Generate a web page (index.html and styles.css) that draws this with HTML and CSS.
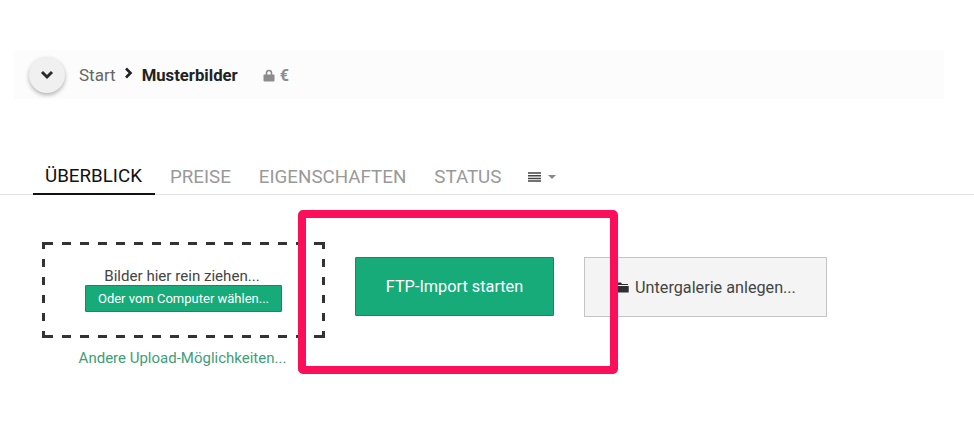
FILE: index.html
```html
<!DOCTYPE html>
<html lang="de">
<head>
  <meta charset="UTF-8" />
  <meta name="viewport" content="width=device-width, initial-scale=1.0"/>
  <title>Musterbilder</title>
  <link rel="stylesheet" href="styles.css">
</head>
<body>
  <div class="crumbs">
    <button class="btn-round" type="button">
      <svg width="14" height="10" viewBox="0 0 14 10"><path d="M2 2 L7 7 L12 2" fill="none" stroke="#2b2b2b" stroke-width="3"/></svg>
    </button>
    <a class="crumb" href="#">Start</a>
    <svg class="crumb-sep" width="9" height="12" viewBox="0 0 9 12"><path d="M2 1.5 L6.5 6 L2 10.5" fill="none" stroke="#222" stroke-width="2.6"/></svg>
    <strong class="crumb-current">Musterbilder</strong>
    <span class="crumb-icons">
      <svg width="12" height="13" viewBox="0 0 12 13"><path d="M3.5 6 V4 a2.5 2.5 0 0 1 5 0 V6" fill="none" stroke="#8c8c8c" stroke-width="1.6"/><rect x="0.5" y="5.5" width="11" height="7" rx="1" fill="#8c8c8c"/></svg>
      <span class="euro">€</span>
    </span>
  </div>

  <nav class="tabs">
    <a class="tab active" href="#">ÜBERBLICK</a>
    <a class="tab" href="#">PREISE</a>
    <a class="tab" href="#">EIGENSCHAFTEN</a>
    <a class="tab" href="#">STATUS</a>
    <a class="tab tab-more" href="#">
      <svg width="13" height="10" viewBox="0 0 13 10"><path d="M0 1 H13 M0 3.7 H13 M0 6.4 H13 M0 9 H13" stroke="#444" stroke-width="1.5"/></svg>
      <span class="caret"></span>
    </a>
  </nav>

  <main class="actions">
    <div class="upload">
      <div class="dropzone">
        <p>Bilder hier rein ziehen...</p>
        <button class="btn-green btn-small" type="button">Oder vom Computer wählen...</button>
      </div>
      <a class="upload-link" href="#">Andere Upload-Möglichkeiten...</a>
    </div>
    <button class="btn-green btn-big" type="button">FTP-Import starten</button>
    <button class="btn-grey" type="button">
      <svg width="13" height="11" viewBox="0 0 13 11"><path d="M1 0.5 H5 L6 2 H12 V3 H0.5 V1 Z M0.3 4 H12.7 V10.5 H0.3 Z" fill="#2f2f2f"/></svg>
      Untergalerie anlegen...
    </button>
  </main>

  <div class="highlight"></div>
</body>
</html>
```

FILE: styles.css
```css
body {
  margin: 0;
  font-family: Roboto, Arial, sans-serif;
  background-color: white;
  color: #333;
  overflow: hidden;
}

.crumbs {
  display: flex;
  align-items: center;
  height: 49px;
  margin: 50px 30px 0 14px;
  padding-left: 15px;
  background-color: #fcfcfc;
}

.btn-round {
  display: flex;
  align-items: center;
  justify-content: center;
  width: 36px;
  height: 36px;
  padding: 0;
  border: none;
  border-radius: 50%;
  background-color: #f0f0f0;
  box-shadow: 0 2px 4px rgba(0, 0, 0, 0.3);
  margin-right: 14px;
}

.crumb {
  font-size: 17px;
  padding-top: 1px;
  color: #666;
  text-decoration: none;
}

.crumb-sep {
  margin: 0 9px 3px 8px;
}

.crumb-current {
  font-size: 16.7px;
  padding-top: 1px;
  font-weight: 700;
  color: #222;
}

.crumb-icons {
  display: flex;
  align-items: center;
  gap: 5px;
  margin-left: 25px;
  padding-top: 1px;
}

.euro {
  font-size: 16px;
  font-weight: 700;
  padding-top: 1px;
  color: #8c8c8c;
}

.tabs {
  display: flex;
  align-items: stretch;
  height: 40px;
  margin-top: 55px;
  padding-left: 33px;
  border-bottom: 1px solid #e4e4e4;
}

.tab {
  display: flex;
  align-items: center;
  padding: 5px 12px 0;
  margin-right: 4px;
  font-size: 18.75px;
  color: #999;
  text-decoration: none;
}

.tab.active {
  color: #111;
  padding-right: 13px;
  margin-right: 3px;
  margin-bottom: -1px;
  border-bottom: 2px solid #111;
}

.tab-more {
  gap: 7px;
  padding-left: 11px;
}

.caret {
  width: 0;
  height: 0;
  border-left: 4px solid transparent;
  border-right: 4px solid transparent;
  border-top: 4px solid #888;
}

.actions {
  display: flex;
  align-items: flex-start;
  padding: 47px 0 0 42px;
}

/* gestrichelter Rahmen: 9px Strich, 9px Luecke, Ecken als L */
.dropzone {
  box-sizing: border-box;
  display: flex;
  flex-direction: column;
  align-items: center;
  justify-content: center;
  width: 283px;
  height: 96px;
  padding-bottom: 2px;
  --dash-h: repeating-linear-gradient(90deg, transparent 0 2px, #333 2px 11px, transparent 11px 18px, transparent 18px);
  --dash-v: repeating-linear-gradient(180deg, #333 0 7px, transparent 7px 17px, #333 17px 18px);
  background-image: var(--dash-h), var(--dash-h), var(--dash-v), var(--dash-v);
  background-repeat: no-repeat;
  background-size: 100% 3px, 100% 3px, 3px 100%, 3px 100%;
  background-position: left top, left bottom, left top, right top;
}

.dropzone p {
  margin: 0;
  padding-right: 3px;
  font-size: 15.1px;
  color: #444;
}

.upload-link {
  display: block;
  margin-top: 11px;
  padding-right: 2px;
  text-align: center;
  font-size: 15px;
  color: #3e9e78;
  text-decoration: none;
}

button {
  font-family: inherit;
  cursor: pointer;
}

.btn-green {
  color: white;
  background-color: #17ab7a;
  border: 1px solid #128a62;
  border-radius: 1px;
}

.btn-small {
  width: 197px;
  height: 27px;
  padding: 0;
  font-size: 13px;
}

.btn-big {
  width: 199px;
  height: 59px;
  margin: 15px 0 0 30px;
  padding: 0;
  font-size: 16.3px;
}

.btn-grey {
  display: flex;
  align-items: center;
  justify-content: center;
  gap: 6px;
  width: 243px;
  height: 60px;
  margin: 15px 0 0 30px;
  padding: 0 0 0 1px;
  font-size: 16.2px;
  color: #444;
  background-color: #f4f4f4;
  border: 1px solid #c4c4c4;
}

/* Markierung liegt ueber dem Inhalt */
.highlight {
  position: absolute;
  left: 298px;
  top: 210px;
  box-sizing: border-box;
  width: 320px;
  height: 164px;
  border: 8px solid #fb0f5a;
  border-radius: 5px;
}
```
